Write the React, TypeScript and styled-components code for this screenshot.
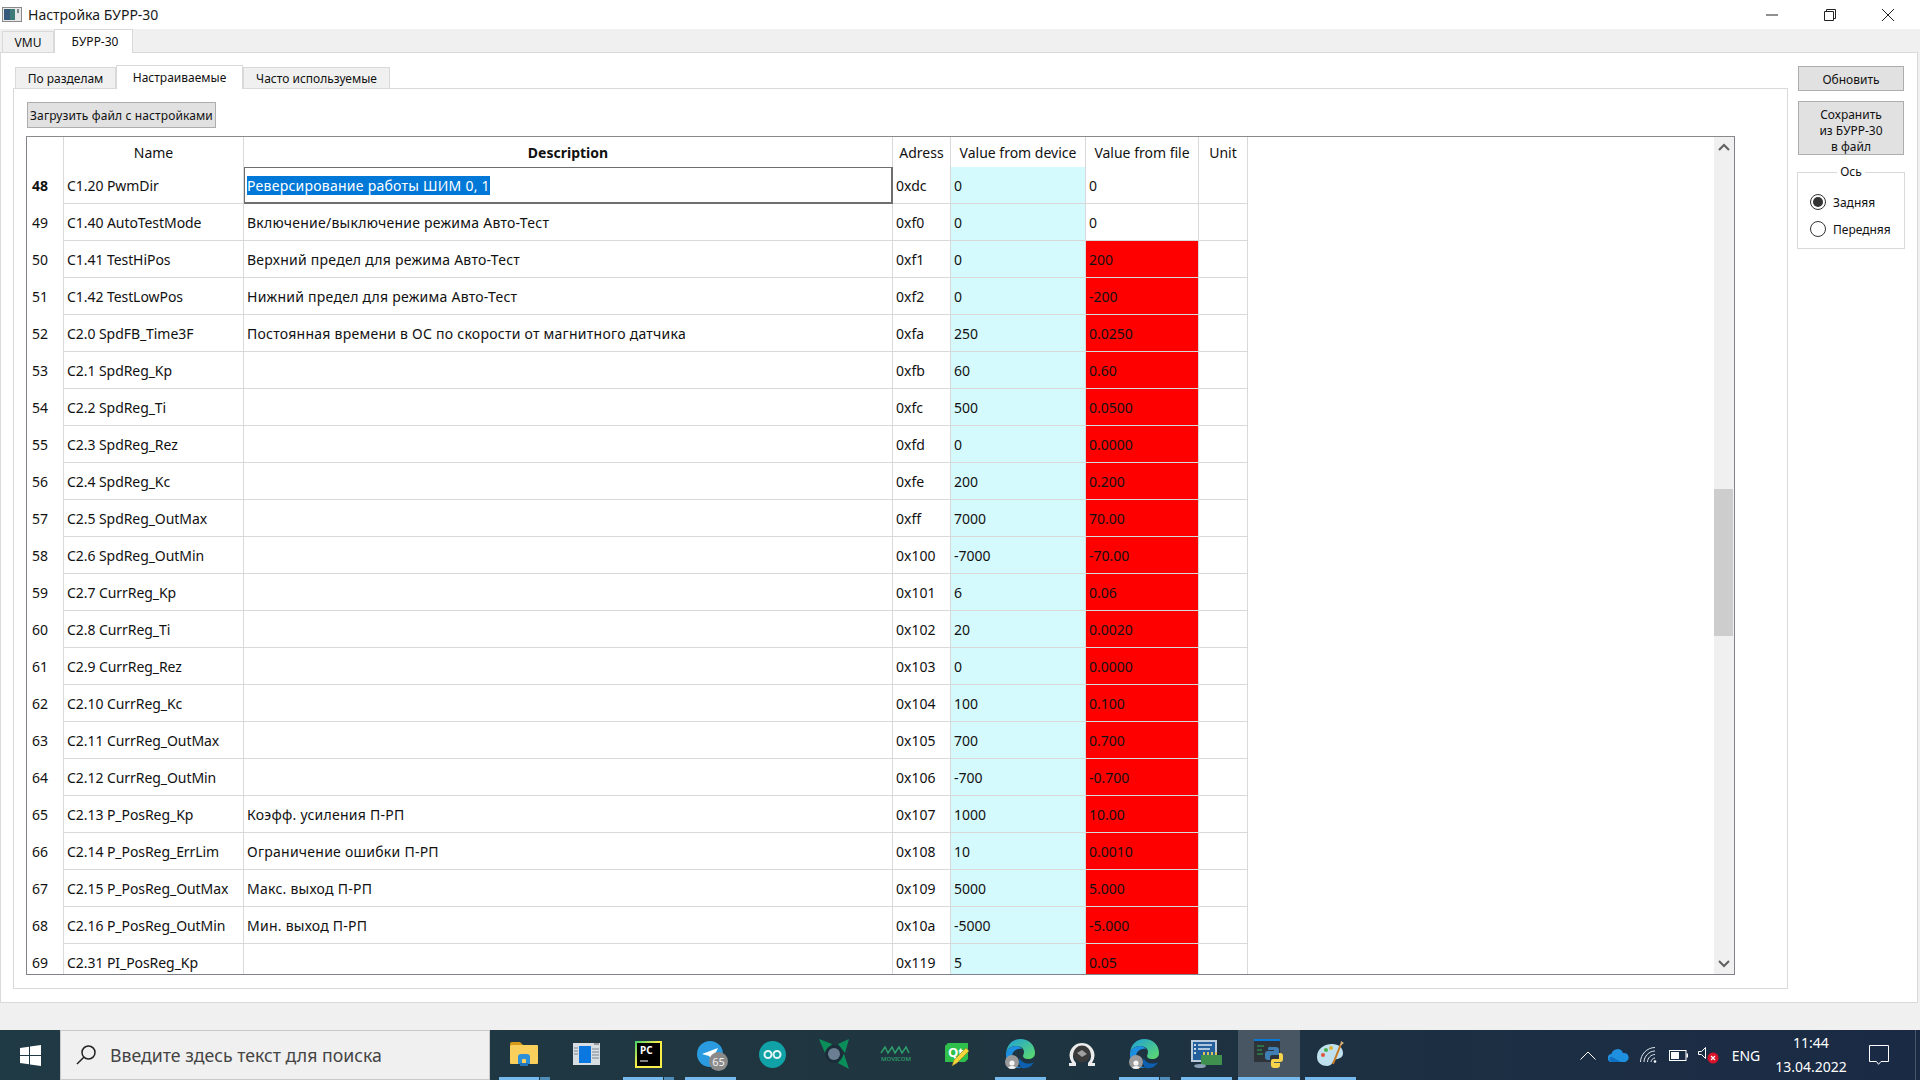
import React from "react"
import styled, { createGlobalStyle } from "styled-components"

const UI_FONT = `"Noto Sans", "Open Sans", sans-serif`

const GlobalStyle = createGlobalStyle`
  html, body {
    margin: 0;
    padding: 0;
    background: #fff;
  }
  * {
    box-sizing: border-box;
  }
`

const rows = [
  ["48", "C1.20 PwmDir", "Реверсирование работы ШИМ 0, 1", "0xdc", "0", "0"],
  ["49", "C1.40 AutoTestMode", "Включение/выключение режима Авто-Тест", "0xf0", "0", "0"],
  ["50", "C1.41 TestHiPos", "Верхний предел для режима Авто-Тест", "0xf1", "0", "200"],
  ["51", "C1.42 TestLowPos", "Нижний предел для режима Авто-Тест", "0xf2", "0", "-200"],
  ["52", "C2.0 SpdFB_Time3F", "Постоянная времени в ОС по скорости от магнитного датчика", "0xfa", "250", "0.0250"],
  ["53", "C2.1 SpdReg_Kp", "", "0xfb", "60", "0.60"],
  ["54", "C2.2 SpdReg_Ti", "", "0xfc", "500", "0.0500"],
  ["55", "C2.3 SpdReg_Rez", "", "0xfd", "0", "0.0000"],
  ["56", "C2.4 SpdReg_Kc", "", "0xfe", "200", "0.200"],
  ["57", "C2.5 SpdReg_OutMax", "", "0xff", "7000", "70.00"],
  ["58", "C2.6 SpdReg_OutMin", "", "0x100", "-7000", "-70.00"],
  ["59", "C2.7 CurrReg_Kp", "", "0x101", "6", "0.06"],
  ["60", "C2.8 CurrReg_Ti", "", "0x102", "20", "0.0020"],
  ["61", "C2.9 CurrReg_Rez", "", "0x103", "0", "0.0000"],
  ["62", "C2.10 CurrReg_Kc", "", "0x104", "100", "0.100"],
  ["63", "C2.11 CurrReg_OutMax", "", "0x105", "700", "0.700"],
  ["64", "C2.12 CurrReg_OutMin", "", "0x106", "-700", "-0.700"],
  ["65", "C2.13 P_PosReg_Kp", "Коэфф. усиления П-РП", "0x107", "1000", "10.00"],
  ["66", "C2.14 P_PosReg_ErrLim", "Ограничение ошибки П-РП", "0x108", "10", "0.0010"],
  ["67", "C2.15 P_PosReg_OutMax", "Макс. выход П-РП", "0x109", "5000", "5.000"],
  ["68", "C2.16 P_PosReg_OutMin", "Мин. выход П-РП", "0x10a", "-5000", "-5.000"],
  ["69", "C2.31 PI_PosReg_Kp", "", "0x119", "5", "0.05"],
]

const columnWidths = [37, 180, 649, 58, 135, 113, 49]

const App = () => {
  return (
    <Page>
      <GlobalStyle />
      <TitleBar>
        <TitleLeft>
          <AppIcon />
          <TitleText>Настройка БУРР-30</TitleText>
        </TitleLeft>
        <WindowControls>
          <WindowButton>
            <svg width="12" height="12" viewBox="0 0 12 12"><path d="M0 6h12" stroke="#222" /></svg>
          </WindowButton>
          <WindowButton>
            <svg width="12" height="12" viewBox="0 0 12 12" fill="none" stroke="#222"><path d="M.5 2.500h9v9h-9zM2.500 2.500v-2h9v9h-2" /></svg>
          </WindowButton>
          <WindowButton>
            <svg width="12" height="12" viewBox="0 0 12 12"><path d="M0 0l12 12M12 0L0 12" stroke="#222" /></svg>
          </WindowButton>
        </WindowControls>
      </TitleBar>

      <Main>
        <TabBar>
          <Tab>VMU</Tab>
          <Tab $active>БУРР-30</Tab>
        </TabBar>
        <OuterPanel>
          <LeftArea>
            <TabBar>
              <InnerTab $w={101}>По разделам</InnerTab>
              <InnerTab $w={127} $active>Настраиваемые</InnerTab>
              <InnerTab $w={147}>Часто используемые</InnerTab>
            </TabBar>
            <InnerPanel>
              <LoadButton>Загрузить файл с настройками</LoadButton>
              <TableFrame>
                <TableViewport>
                  <Table>
                    <colgroup>
                      {columnWidths.map((w, i) => (
                        <col key={i} style={{ width: w }} />
                      ))}
                    </colgroup>
                    <thead>
                      <tr>
                        <Th />
                        <Th>Name</Th>
                        <Th $bold>Description</Th>
                        <Th>Adress</Th>
                        <Th>Value from device</Th>
                        <Th>Value from file</Th>
                        <Th>Unit</Th>
                      </tr>
                    </thead>
                    <tbody>
                      {rows.map((row, i) => (
                        <tr key={row[0]}>
                          <RowHead $bold={i === 0}>{row[0]}</RowHead>
                          <NameCell>{row[1]}</NameCell>
                          {i === 0 ? (
                            <EditCell>
                              <Selected>{row[2]}</Selected>
                            </EditCell>
                          ) : (
                            <DescCell>{row[2]}</DescCell>
                          )}
                          <Td>{row[3]}</Td>
                          <Td $bg="#d5fafe">{row[4]}</Td>
                          <Td $bg={i < 2 ? undefined : "#ff0000"}>{row[5]}</Td>
                          <Td />
                        </tr>
                      ))}
                    </tbody>
                  </Table>
                </TableViewport>
                <ScrollBar>
                  <ScrollArrow>
                    <svg width="12" height="8" viewBox="0 0 12 8" fill="none" stroke="#606060" strokeWidth="2"><path d="M1 7l5-5 5 5" /></svg>
                  </ScrollArrow>
                  <ScrollThumb />
                  <ScrollArrow $bottom>
                    <svg width="12" height="8" viewBox="0 0 12 8" fill="none" stroke="#606060" strokeWidth="2"><path d="M1 1l5 5 5-5" /></svg>
                  </ScrollArrow>
                </ScrollBar>
              </TableFrame>
            </InnerPanel>
          </LeftArea>

          <SideColumn>
            <SideButton $h={25} $shift={2}>Обновить</SideButton>
            <SideButton $h={54} $shift={5}>
              Сохранить
              <br />
              из БУРР-30
              <br />в файл
            </SideButton>
            <AxisGroup>
              <AxisLegend>Ось</AxisLegend>
              <RadioRow>
                <Radio $checked />
                Задняя
              </RadioRow>
              <RadioRow>
                <Radio />
                Передняя
              </RadioRow>
            </AxisGroup>
          </SideColumn>
        </OuterPanel>
      </Main>

      <Taskbar>
        <StartButton>
          <svg width="21" height="21" viewBox="0 0 21 21" fill="#fff">
            <path d="M0 3l9-1.300v8.300H0zM10 1.500L21 0v10H10zM0 11h9v8.300L0 18zM10 11h11v10l-11-1.500z" />
          </svg>
        </StartButton>
        <SearchBox>
          <svg width="22" height="22" viewBox="0 0 22 22" fill="none" stroke="#222" strokeWidth="1.500">
            <circle cx="13.500" cy="8.500" r="6.500" />
            <path d="M8.800 13.200L2 20" />
          </svg>
          <SearchText>Введите здесь текст для поиска</SearchText>
        </SearchBox>
        <TaskIcons>
          <TaskButton $under="stack">
            <svg width="28" height="26" viewBox="0 0 28 26">
              <path d="M0 3a2 2 0 012-2h8l3 3h-13z" fill="#d99a1c" />
              <rect y="4" width="28" height="19" rx="1" fill="#fbcf5c" />
              <path d="M8 23v-7a3 3 0 013-3h6a3 3 0 013 3v7h-4v-4a1 1 0 00-1-1h-2a1 1 0 00-1 1v4z" fill="#2b8fd9" />
              <rect x="10" y="22" width="8" height="3" fill="#2474b8" />
            </svg>
          </TaskButton>
          <TaskButton>
            <svg width="27" height="22" viewBox="0 0 27 22">
              <rect width="27" height="22" fill="#d8dde2" />
              <rect x="6" y="3" width="12" height="17" fill="#0a78e0" />
              <path d="M1 5h4M1 8h4M1 11h4M19 6h7M19 9h7M19 12h7M19 15h7" stroke="#7a8590" />
              <path d="M21 1h5" stroke="#555" />
            </svg>
          </TaskButton>
          <TaskButton $under="stack">
            <svg width="27" height="27" viewBox="0 0 27 27">
              <defs>
                <linearGradient id="pcFrame" x1="0" y1="0" x2="1" y2="1">
                  <stop offset="0" stopColor="#3fd06a" />
                  <stop offset=".45" stopColor="#f7f04a" />
                </linearGradient>
              </defs>
              <rect width="27" height="27" fill="url(#pcFrame)" />
              <rect x="2" y="2" width="23" height="23" fill="#000" />
              <text x="5" y="13" fill="#fff" fontSize="10" fontWeight="700" fontFamily={UI_FONT}>PC</text>
              <path d="M5 20h8" stroke="#fff" />
            </svg>
          </TaskButton>
          <TaskButton $under="open">
            <TelegramIcon />
          </TaskButton>
          <TaskButton>
            <svg width="27" height="27" viewBox="0 0 27 27">
              <circle cx="13.500" cy="13.500" r="13.500" fill="#10a2a6" />
              <g fill="none" stroke="#e4f6f6" strokeWidth="2">
                <circle cx="9" cy="13.500" r="3.500" />
                <circle cx="18" cy="13.500" r="3.500" />
              </g>
            </svg>
          </TaskButton>
          <TaskButton>
            <svg width="30" height="30" viewBox="0 0 30 30">
              <path d="M0 0l13 5-7 9zM30 0l-4 14-7-9zM30 30l-11-6 6-9z" fill="#0b8f5a" />
              <circle cx="15" cy="15" r="9" fill="#1b2d38" />
              <circle cx="15" cy="15" r="6" fill="#6b7f92" />
            </svg>
          </TaskButton>
          <TaskButton>
            <svg width="32" height="20" viewBox="0 0 32 20">
              <path d="M1 9l4-6 3 6 4-6 3 6 4-6 3 6 4-6 3 6" fill="none" stroke="#2e9c6a" strokeWidth="1.600" />
              <text x="1" y="16.500" fontSize="6" textLength="30" lengthAdjust="spacingAndGlyphs" fill="#2e9c6a" fontFamily={UI_FONT} fontWeight="600">MOVICOM</text>
            </svg>
          </TaskButton>
          <TaskButton>
            <svg width="26" height="26" viewBox="0 0 26 26">
              <path d="M3 2h20v16l-3 3H0V5z" fill="#2fc04b" />
              <text x="3" y="16" fontSize="13" fontWeight="700" fill="#fff" fontFamily={UI_FONT}>Qt</text>
              <path d="M7 25l2-6L21 7l3 3L12 22z" fill="#f6d53a" stroke="#8c7a2a" strokeWidth=".6" />
            </svg>
          </TaskButton>
          <TaskButton $under="open">
            <EdgeIcon />
          </TaskButton>
          <TaskButton>
            <svg width="28" height="28" viewBox="0 0 28 28">
              <path d="M1 26h7v-3a9 9 0 1112 0v3h7v-3h-3a12.500 12.500 0 10-20 0H1z" fill="#ececec" />
              <circle cx="14" cy="14" r="8.500" fill="#3a3a3a" />
              <path d="M9 13l5-3 5 4-5 3z" fill="#a0a0a0" />
            </svg>
          </TaskButton>
          <TaskButton $under="stack">
            <EdgeIcon />
          </TaskButton>
          <TaskButton $under="open">
            <svg width="31" height="28" viewBox="0 0 31 28">
              <rect width="26" height="22" fill="#b9cbdc" />
              <rect x="2" y="2" width="22" height="18" fill="#25609c" />
              <path d="M7 5h14M7 9h12" stroke="#dbe8f2" strokeWidth="1.500" />
              <path d="M4 4v2M4 8v2M4 12v2" stroke="#fff" strokeWidth="1.500" />
              <rect x="10" y="15" width="21" height="10" fill="#3f8f4f" />
              <path d="M13 15v-3M17 15v-3M21 15v-3M25 15v-3" stroke="#d8c65a" strokeWidth="2" />
              <ellipse cx="9" cy="26" rx="6" ry="2" fill="#8aa0b5" />
            </svg>
          </TaskButton>
          <TaskButton $under="full" $active>
            <svg width="29" height="30" viewBox="0 0 29 30">
              <rect y="1" width="26" height="22" fill="#2d3338" />
              <rect y="0" width="26" height="2" fill="#0a78d7" />
              <path d="M3 7h7M3 11h5M3 15h6" stroke="#2fb05a" />
              <path d="M17 8h5a3 3 0 013 3v5h-7a2 2 0 00-2 2v3h-2a3 3 0 01-3-3v-3a3 3 0 013-3h6v-1h-6v-1a2 2 0 013-2z" fill="#3f7fb5" />
              <path d="M25 14h1a3 3 0 013 3v3a3 3 0 01-3 3h-6v1h6v2a3 3 0 01-3 3h-3a3 3 0 01-3-3v-4a2 2 0 012-2h6z" fill="#f7d44a" />
            </svg>
          </TaskButton>
          <TaskButton $under="open">
            <svg width="29" height="28" viewBox="0 0 29 28">
              <path d="M1 17C1 8 9 4 16 4c7 0 11 4 11 9 0 6-5 5-8 7s-3 6-8 6-10-3-10-9z" fill="#bfe0ee" />
              <circle cx="7" cy="15" r="2" fill="#e0533c" />
              <circle cx="10" cy="10" r="2" fill="#4bb04f" />
              <circle cx="15" cy="8" r="2" fill="#e2b33a" />
              <path d="M17 24L25 4" stroke="#c9761f" strokeWidth="2" />
              <path d="M24 6l1-5 3 2z" fill="#d8b07a" />
            </svg>
          </TaskButton>
        </TaskIcons>
        <Tray>
          <TrayItem>
            <svg width="16" height="9" viewBox="0 0 16 9" fill="none" stroke="#fff"><path d="M.5 8.500L8 1l7.500 7.500" /></svg>
          </TrayItem>
          <TrayItem>
            <svg width="21" height="13" viewBox="0 0 21 13">
              <path d="M4 13a4 4 0 01-.5-8A6 6 0 0115 4a4.500 4.500 0 012 9z" fill="#1f8fe0" />
              <path d="M4 13a3 3 0 01-1-5.500L13 13z" fill="#0f6fc0" />
            </svg>
          </TrayItem>
          <TrayItem>
            <svg width="17" height="16" viewBox="0 0 17 16" fill="none" stroke="#dfe4ea" strokeWidth="1">
              <path d="M.5 15C.5 7.500 7 .5 15 .5M4 15C4 9.500 9 4 15 4M7.500 15c0-4 3.500-7.500 7.500-7.500M11 15c0-2 2-4 4-4" />
              <circle cx="15" cy="14.500" r="1.300" fill="#fff" stroke="none" />
            </svg>
          </TrayItem>
          <TrayItem>
            <svg width="19" height="11" viewBox="0 0 19 11">
              <rect x=".5" y=".5" width="16.500" height="10" fill="none" stroke="#fff" />
              <rect x="2" y="2" width="8" height="7" fill="#fff" />
              <rect x="17.500" y="3.500" width="1.500" height="4" fill="#fff" />
            </svg>
          </TrayItem>
          <TrayItem>
            <svg width="21" height="17" viewBox="0 0 21 17">
              <path d="M.5 4.500h3l4-4v11l-4-4h-3z" fill="none" stroke="#fff" />
              <circle cx="15" cy="11" r="5.500" fill="#d7132a" />
              <path d="M13 9l4 4M17 9l-4 4" stroke="#fff" strokeWidth="1.200" />
            </svg>
          </TrayItem>
          <TrayLang>ENG</TrayLang>
          <Clock>
            <div>11:44</div>
            <div>13.04.2022</div>
          </Clock>
          <Notify>
            <svg width="20" height="20" viewBox="0 0 20 20" fill="none" stroke="#fff">
              <path d="M.5.500h19v16h-7.500L9.500 19.300 7.500 16.500H.5z" />
            </svg>
          </Notify>
        </Tray>
        <TrayEdge />
      </Taskbar>
    </Page>
  )
}

export default App

const AppIcon = () => (
  <svg width="20" height="15" viewBox="0 0 20 15">
    <rect x=".5" y=".5" width="19" height="14" fill="#e8e8e8" stroke="#8a8a8a" />
    <rect x="2" y="2" width="11" height="11" fill="#3d7a78" />
    <rect x="2" y="2" width="6" height="11" fill="#35597a" />
    <rect x="15" y="2" width="2" height="4" fill="#7a8a8a" />
  </svg>
)

const TelegramIcon = () => (
  <BadgeWrap>
    <svg width="26" height="26" viewBox="0 0 26 26">
      <circle cx="13" cy="13" r="13" fill="#2a9be0" />
      <path d="M5 13l16-6-6 12-3-4z" fill="#fff" />
    </svg>
    <Badge>65</Badge>
  </BadgeWrap>
)

const EdgeIcon = () => (
  <BadgeWrap>
    <svg width="30" height="30" viewBox="0 0 30 30">
      <defs>
        <linearGradient id="edgeSwirl" x1="0" y1="0" x2="1" y2="1">
          <stop offset="0" stopColor="#1f9fd8" />
          <stop offset="1" stopColor="#5fdc6a" />
        </linearGradient>
      </defs>
      <path d="M1 14C2 5 8 0 15 0c9 0 15 6 15 14 0 4-3 6-7 6-3 0-5-1-5-3 0-1 1-2 1-4 0-4-4-6-8-6-5 0-9 3-10 7z" fill="url(#edgeSwirl)" />
      <path d="M1 14c1-4 5-7 10-7 3 0 5 1 6 3-5-1-10 2-10 8 0 5 4 10 10 11C8 30 0 24 1 14z" fill="#1d8fe0" />
      <path d="M17 29c6 1 10-2 12-6-3 2-8 2-11 0-2-1-3-3-3-4-2 4-1 8 2 10z" fill="#0d5fb0" />
    </svg>
    <ProfileDot>
      <svg width="14" height="14" viewBox="0 0 14 14" fill="#f4f4f4">
        <circle cx="7" cy="5" r="2.600" />
        <path d="M2 13c0-3 2-5 5-5s5 2 5 5z" />
      </svg>
    </ProfileDot>
  </BadgeWrap>
)

const Page = styled.div`
  width: 1920px;
  height: 1080px;
  display: flex;
  flex-direction: column;
  overflow: hidden;
  font-family: ${UI_FONT};
  color: #111;
`

const TitleBar = styled.div`
  height: 29px;
  flex: none;
  display: flex;
  align-items: center;
  justify-content: space-between;
  background: #fff;
`

const TitleLeft = styled.div`
  display: flex;
  align-items: center;
  gap: 6px;
  padding-left: 2px;
`

const TitleText = styled.div`
  font-size: 14px;
  color: #1a1a1a;
`

const WindowControls = styled.div`
  display: flex;
  padding-right: 3px;
`

const WindowButton = styled.div`
  width: 58px;
  height: 29px;
  display: flex;
  align-items: center;
  justify-content: center;
`

const Main = styled.div`
  flex: 1;
  display: flex;
  flex-direction: column;
  background: #f0f0f0;
  padding-bottom: 27px;
  min-height: 0;
`

const TabBar = styled.div`
  height: 24px;
  flex: none;
  display: flex;
  align-items: flex-end;
  padding-left: 2px;
  position: relative;
  z-index: 1;
  margin-bottom: -1px;
`

const Tab = styled.div<{ $active?: boolean }>`
  height: ${(p) => (p.$active ? 24 : 22)}px;
  width: ${(p) => (p.$active ? 79 : 52)}px;
  padding-left: ${(p) => (p.$active ? 3 : 0)}px;
  display: flex;
  align-items: center;
  justify-content: center;
  font-size: 12px;
  background: ${(p) => (p.$active ? "#fff" : "#f0f0f0")};
  border: 1px solid #d9d9d9;
  border-bottom: ${(p) => (p.$active ? "none" : "1px solid #d9d9d9")};
`

const InnerTab = styled.div<{ $w: number; $active?: boolean }>`
  height: ${(p) => (p.$active ? 24 : 22)}px;
  width: ${(p) => p.$w}px;
  display: flex;
  align-items: center;
  justify-content: center;
  font-size: 12px;
  background: ${(p) => (p.$active ? "#fff" : "#f0f0f0")};
  border: 1px solid #d9d9d9;
  border-bottom: ${(p) => (p.$active ? "none" : "1px solid #d9d9d9")};
`

const OuterPanel = styled.div`
  flex: 1;
  min-height: 0;
  width: 1918px;
  display: flex;
  background: #fff;
  border: 1px solid #d9d9d9;
  padding: 12px 12px 13px 12px;
`

const LeftArea = styled.div`
  width: 1775px;
  flex: none;
  display: flex;
  flex-direction: column;
`

const InnerPanel = styled.div`
  flex: 1;
  min-height: 0;
  display: flex;
  flex-direction: column;
  border: 1px solid #d9d9d9;
  padding: 13px 52px 13px 12px;
`

const LoadButton = styled.div`
  width: 189px;
  height: 26px;
  margin-left: 1px;
  flex: none;
  display: flex;
  align-items: center;
  justify-content: center;
  font-size: 12px;
  letter-spacing: 0.12px;
  background: #e1e1e1;
  border: 1px solid #adadad;
`

const TableFrame = styled.div`
  flex: 1;
  min-height: 0;
  margin-top: 8px;
  display: flex;
  border: 1px solid #82828c;
  border-top-color: #8a8a8a;
`

const TableViewport = styled.div`
  flex: 1;
  min-width: 0;
  overflow: hidden;
`

const Table = styled.table`
  table-layout: fixed;
  width: 1221px;
  border-collapse: separate;
  border-spacing: 0;
  font-size: 14px;
`

const Th = styled.th<{ $bold?: boolean }>`
  height: 30px;
  padding: 0;
  font-weight: ${(p) => (p.$bold ? 700 : 400)};
  text-align: center;
  border-right: 1px solid #d9d9d9;
`

const RowHead = styled.td<{ $bold?: boolean }>`
  height: 37px;
  padding: 0 0 0 5px;
  font-weight: ${(p) => (p.$bold ? 700 : 400)};
  border-right: 1px solid #d9d9d9;
`

const Td = styled.td<{ $bg?: string }>`
  height: 37px;
  padding: 0 3px;
  white-space: nowrap;
  overflow: hidden;
  background: ${(p) => p.$bg ?? "transparent"};
  border-right: 1px solid #d9d9d9;
  border-bottom: 1px solid #d9d9d9;
`

const NameCell = styled(Td)`
  letter-spacing: -0.06px;
`

const DescCell = styled(Td)`
  letter-spacing: 0.25px;
`

const EditCell = styled.td`
  height: 37px;
  padding: 0 2px;
  white-space: nowrap;
  letter-spacing: 0.25px;
  border: solid #6e6e6e;
  border-width: 1px 2px 2px 1px;
`

const Selected = styled.span`
  background: #0078d7;
  color: #fff;
`

const ScrollBar = styled.div`
  width: 20px;
  flex: none;
  display: flex;
  flex-direction: column;
  background: #f0f0f0;
`

const ScrollArrow = styled.div<{ $bottom?: boolean }>`
  height: 20px;
  flex: none;
  display: flex;
  align-items: center;
  justify-content: center;
  margin-top: ${(p) => (p.$bottom ? "auto" : "0")};
`

const ScrollThumb = styled.div`
  height: 147px;
  margin: 332px 1px 0 0;
  background: #cdcdcd;
`

const SideColumn = styled.div`
  width: 108px;
  flex: none;
  margin-left: 9px;
  display: flex;
  flex-direction: column;
  align-items: center;
  gap: 10px;
  padding-top: 1px;
`

const SideButton = styled.div<{ $h: number; $shift: number }>`
  width: 106px;
  height: ${(p) => p.$h}px;
  flex: none;
  display: flex;
  align-items: center;
  justify-content: center;
  text-align: center;
  font-size: 12px;
  line-height: 16px;
  padding-top: ${(p) => p.$shift}px;
  background: #e1e1e1;
  border: 1px solid #adadad;
`

const AxisGroup = styled.fieldset`
  width: 108px;
  height: 84px;
  margin: 0;
  padding: 13px 0 0 0;
  border: 1px solid #d9d9d9;
  display: flex;
  flex-direction: column;
  gap: 7px;
`

const AxisLegend = styled.legend`
  margin: 0 auto;
  padding: 0 3px;
  font-size: 12px;
  line-height: 14px;
`

const RadioRow = styled.div`
  display: flex;
  align-items: center;
  gap: 7px;
  height: 20px;
  margin-left: 12px;
  font-size: 12px;
`

const Radio = styled.span<{ $checked?: boolean }>`
  width: 16px;
  height: 16px;
  border-radius: 50%;
  border: 1px solid #333;
  display: flex;
  align-items: center;
  justify-content: center;
  &::after {
    content: "";
    display: ${(p) => (p.$checked ? "block" : "none")};
    width: 10px;
    height: 10px;
    border-radius: 50%;
    background: #333;
  }
`

const Taskbar = styled.div`
  height: 50px;
  flex: none;
  display: flex;
  background: linear-gradient(90deg, #203a45 0%, #1f3540 50%, #1a2a45 100%);
`

const StartButton = styled.div`
  width: 60px;
  display: flex;
  align-items: center;
  justify-content: center;
`

const SearchBox = styled.div`
  width: 430px;
  display: flex;
  align-items: center;
  gap: 13px;
  padding-left: 14px;
  background: #f0f0f0;
  border: 1px solid #c8c8c8;
`

const SearchText = styled.div`
  font-size: 17.7px;
  color: #444;
`

const TaskIcons = styled.div`
  display: flex;
  margin-left: 4px;
`

const TaskButton = styled.div<{ $under?: "open" | "stack" | "full"; $active?: boolean }>`
  position: relative;
  width: 62px;
  height: 50px;
  display: flex;
  align-items: center;
  justify-content: center;
  padding-bottom: 2px;
  padding-right: 2px;
  background: ${(p) => (p.$active ? "#475662" : "transparent")};
  &::after {
    content: "";
    display: ${(p) => (p.$under ? "block" : "none")};
    position: absolute;
    bottom: 0;
    height: 3px;
    left: ${(p) => (p.$under === "full" ? 0 : 5)}px;
    right: ${(p) => (p.$under === "full" ? 0 : 6)}px;
    background: ${(p) =>
      p.$under === "stack"
        ? "linear-gradient(90deg, #76b9ed 0 40px, #1f3540 40px 41px, #4f8db8 41px)"
        : "#76b9ed"};
  }
`

const BadgeWrap = styled.div`
  position: relative;
  display: flex;
`

const Badge = styled.div`
  position: absolute;
  right: -5px;
  bottom: -4px;
  width: 19px;
  height: 19px;
  border-radius: 50%;
  background: #8a8a8a;
  color: #f2f2f2;
  font-size: 11px;
  line-height: 19px;
  text-align: center;
`

const ProfileDot = styled.div`
  position: absolute;
  left: 0;
  bottom: 0;
  width: 14px;
  height: 14px;
  border-radius: 50%;
  background: #9a9a9a;
  overflow: hidden;
`

const Tray = styled.div`
  margin-left: auto;
  display: flex;
  align-items: center;
  color: #fff;
  padding-right: 26px;
`

const TrayItem = styled.div`
  width: 30px;
  display: flex;
  align-items: center;
  justify-content: center;
`

const TrayLang = styled.div`
  width: 40px;
  margin-left: 3px;
  text-align: center;
  font-size: 14px;
`

const Clock = styled.div`
  width: 90px;
  text-align: center;
  font-size: 14px;
  line-height: 24px;
`

const Notify = styled.div`
  margin-left: 13px;
  display: flex;
`

const TrayEdge = styled.div`
  width: 5px;
  flex: none;
  border-left: 1px solid #4a5666;
`
